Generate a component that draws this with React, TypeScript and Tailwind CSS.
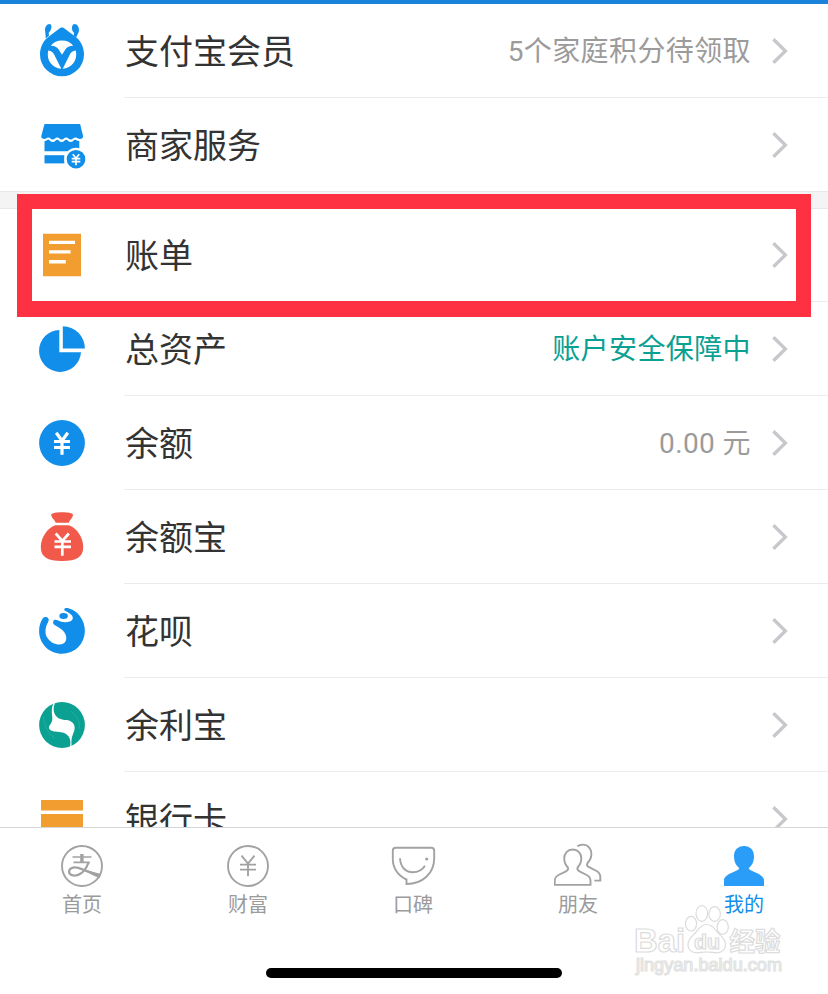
import type { ReactNode } from "react";

const BLUE = "#108ee9";
const ORANGE = "#f29d30";
const GREEN = "#0aa192";
const GRAY = "#a2a2a2";

function IconMember() {
  return (
    <>
      <g fill={BLUE}>
        <path d="M24 7.5c1.4 0 2.2.7 3.2 1.500L39 18c4.300 4 7 10 7 16.300a22 22 0 1 1-44 0C2 28 4.700 22 9 18L20.800 9c1-.8 1.800-1.500 3.200-1.500z" />
        <path d="M11.800 4C8.500 4 6.600 7.500 7.100 11c.3 2.200.6 4.600.6 7.400l3.500-2.900c-.7-1.400-.6-2.400 0-3.500 1.800-1 3.800-7 .6-8z" />
        <path d="M36.200 4c3.300 0 5.200 3.500 4.700 7-.3 2.200-1.600 3.600-2.600 6.400l-2.800-1.900c.7-1.400.6-2.400 0-3.500-1.800-1-2.500-7 .7-8z" />
      </g>
      <g fill="#fff">
        <path d="M12.800 25.700c2.500-3.300 6.500-5.200 11.200-5.200s8.700 1.900 11.200 5.200c-4.200.2-6 1.300-7.700 3.600L24 34.700l-3.500-5.400c-1.700-2.300-3.500-3.400-7.700-3.600z" />
        <path d="M10.200 30.500c3 .3 4.700 1.500 6.200 4.500l6.900 13.700C14.300 48 8 40.500 10.200 30.500z" />
        <path d="M37.800 30.500c-3 .3-4.700 1.500-6.200 4.500l-6.900 13.700C33.700 48 40 40.500 37.800 30.500z" />
      </g>
    </>
  );
}

function IconShop() {
  return (
    <>
      <g fill={BLUE}>
        <path d="M6.500 10h35.600l3 12.300c0 1.700-1.500 2.700-3 2.700-2.200 0-2.700-1.600-4.700-1.600-2.200 0-2.500 2.200-4.700 2.200s-2.400-2.200-4.500-2.200-2.400 2.200-4.500 2.200-2.300-2.200-4.500-2.200-2.300 2.200-4.500 2.200-2.500-2.200-4.500-2.200c-1.500 0-2 1.600-4 1.600-1.500 0-3-1-3-2.700z" />
        <path d="M6.500 27c2.300 0 2.700-1.600 3.800-1.600S12.500 28 14.700 28s3-2.300 4.500-2.300S21.500 28 23.700 28s3-2.300 4.500-2.300S30.500 28 32.700 28s3-2.300 4.500-2.300c1.200 0 2 1.300 4.100 1.300v10.200H6.500z" />
        <path d="M6.500 41.200h19.800v8.200H6.500z" />
      </g>
      <circle cx="38" cy="45.200" r="10.400" fill={BLUE} stroke="#fff" strokeWidth="2.200" />
      <path d="M34.800 40.200l3.200 4 3.200-4M33.700 44.700h8.600M33.700 47.700h8.600M38 44v7.200" fill="none" stroke="#fff" strokeWidth="1.700" />
    </>
  );
}

function IconBill() {
  return (
    <>
      <path d="M5 9.800h38v42.400H5z" fill={ORANGE} />
      <path d="M11 16.800h26v3.300H11zM11 26.200h21.600v3.400H11zM11 36h16.800v3.400H11z" fill="#fff" />
    </>
  );
}

function IconPie() {
  return (
    <g fill={BLUE}>
      <path d="M21.300 11.900A21 21 0 1 0 43 34.200H21.300z" />
      <path d="M24.800 8.200A22.200 22.200 0 0 1 46.900 30.400H24.800z" />
    </g>
  );
}

function IconBalance() {
  return (
    <>
      <circle cx="24" cy="31" r="22.900" fill={BLUE} />
      <path d="M18.200 20.800l5.800 8 5.800-8M16 29.500h16M16 35.500h16M24 28v14.700" fill="none" stroke="#fff" strokeWidth="3.200" />
    </>
  );
}

function IconBag() {
  return (
    <>
      <g fill="#f15a4a">
        <path d="M13.200 8.800c0-1.600 5-2.500 10.900-2.500S35 7.200 35 8.800c0 3-3 4.800-4.200 8H17.700c-1.200-3.200-4.500-5-4.500-8z" />
        <path d="M17.500 19.200h13.200C39 22 45.200 31.500 45.200 41c0 10-6.500 14-21.200 14S2.800 51 2.800 41c0-9.500 6.400-19 14.700-21.800z" />
      </g>
      <path d="M17.700 27.500l6.600 7.500 6.600-7.500M16.500 35.500H33M16.500 40.800H33M24.300 34.500v15.200" fill="none" stroke="#fff" strokeWidth="2.700" />
    </>
  );
}

function IconHuabei() {
  return (
    <g fill={BLUE}>
      <path d="M29.700 8C39.600 10.300 46.900 19.800 46.900 31A22.900 22.900 0 0 1 24 53.800C11.300 53.800 1.100 43.800 1.100 31c0-4.700 1.200-8.700 3.400-12.200 1.300-2.300 4.200-2.400 5.700-.5 1.200 1.800.1 3.600-.9 5.400C7.200 27.500 6.500 34 9.500 38c3 4.500 7.500 6.600 12 6.500 4.500-.1 7.300-3 6.700-7.500-.7-5.500-5.200-8.500-11.200-11.700-2-1.100-2.200-2.800-1.700-4 .7-1.800 2.700-1.900 4.300-1 3.400 2 8.400 2.500 12.200 1.300 3.600-1.500 3.700-4.500 1.700-6.700-1.600-1.800-4-2.900-6.100-4-2.300-1.100-1-3.600 2.300-2.900z" />
      <ellipse cx="25.600" cy="16" rx="4.300" ry="2.900" />
    </g>
  );
}

function IconYulibao() {
  return (
    <>
      <circle cx="24" cy="31" r="22.900" fill={GREEN} />
      <path
        d="M17 9c-2 4.500-1.700 8.500 0 11.500 2.500 4.500 7 5.300 11.500 5.500 4.500.5 7.800 3 8.100 7 .4 4.500-2.700 8-3.100 13-.2 3 .3 4-.2 7l-1.400.5c.9-4.500.6-7-.4-9.500-2-4-5-5.500-10.500-6-4.500-.5-9.200-.7-10.100-4-.1-3 3.100-4.500 3.400-8.500.2-3-.5-5-.5-8 0-3.500.7-6 1.600-8.200z"
        fill="#fff"
      />
      <path d="M33.500 17.500c5.500 5 8.300 10 8 17M5.500 23c.5 7 3 14.500 11 21" fill="none" stroke="#43b5a8" strokeWidth=".5" />
    </>
  );
}

function IconCard() {
  return <path d="M3 12h42v10.400H3zM3 26h42v30H3z" fill={ORANGE} />;
}

function Chevron() {
  return (
    <svg width="20" height="30" viewBox="0 0 20 30" className="mt-8 shrink-0">
      <path d="M5.400 3.200L17.400 15 5.400 26.800" fill="none" stroke="#c7c7cc" strokeWidth="3.300" />
    </svg>
  );
}

interface RowProps {
  icon: ReactNode;
  label: string;
  note?: string;
  noteClass?: string;
  border?: string;
}

function Row({ icon, label, note, noteClass = "text-[#9b9b9b]", border = "inset" }: RowProps) {
  return (
    <div className={`flex h-[94px] shrink-0 items-start pl-[38px] ${border === "full" ? "border-b border-[#e8e8e8]" : ""}`}>
      <svg width="48" height="61" viewBox="0 0 48 61" className="mt-4 shrink-0">
        {icon}
      </svg>
      <div
        className={`ml-[38px] flex min-w-0 flex-1 items-start self-stretch pr-10 ${
          border === "inset" ? "border-b border-[#ebebeb]" : ""
        }`}
      >
        <span className="mt-6 flex-1 pl-px text-[34px] leading-[48px] text-[#333]">{label}</span>
        {note && (
          <span
            className={`mt-7 mr-[17px] font-['Roboto','Noto_Sans_CJK_SC',sans-serif] text-[28px] leading-[40px] tracking-[0.4px] whitespace-pre ${noteClass}`}
          >
            {note}
          </span>
        )}
        <Chevron />
      </div>
    </div>
  );
}

const TABS = [
  {
    label: "首页",
    icon: (
      <>
        <circle cx="24" cy="24" r="20" />
        <path d="M14.500 15h19M15.500 20.300h16.300" strokeWidth="1.700" />
        <path d="M23.900 12v8.300" strokeWidth="3.400" />
        <path d="M30.500 20.500c-2 6-5.500 10.500-10.300 12.300-4.500 1.700-9 .3-9.100-3-.1-3.300 3.600-5 7.900-4.100 5.500 1 10 4.300 23 8" strokeWidth="2.300" />
        <path d="M26 27.500l17 4.500-1.300 4c-5.500-1.700-11.500-4.500-15.700-8.500z" fill={GRAY} stroke="none" />
      </>
    ),
  },
  {
    label: "财富",
    icon: (
      <>
        <circle cx="24" cy="24" r="20" />
        <path d="M17.500 13.700l6.500 7.800 6.500-7.800M16 22.600h16M16 27.600h16M24 21.500v12.800" />
      </>
    ),
  },
  {
    label: "口碑",
    icon: (
      <>
        <path d="M6.800 5.800h35.400c1.800 0 3 1.200 3 3v7.500c0 15-11.500 25.700-27.700 25.700v-4.500C9.500 34.200 3.800 26.500 3.800 17V8.800c0-1.800 1.200-3 3-3z" />
        <path d="M11 16.300c.3 8.500 5.500 14 12.800 14 5.200 0 9.500-2.300 12.200-6.500" />
        <circle cx="37.700" cy="17" r="1.600" fill={GRAY} stroke="none" />
      </>
    ),
  },
  {
    label: "朋友",
    icon: (
      <>
        <path d="M18.700 7.500c-5.200 0-8.500 3.800-8.500 9 0 4 1.400 6.500 3.700 9 .6 1.600-.3 3-2 3.800L4.500 33c-3 1.500-3.800 3-3.800 6v3.900h35.800V39c0-3-.8-4.500-3.800-6l-7.200-3.700c-1.700-.8-2.500-2.200-1.900-3.800 2.300-2.500 3.700-5 3.700-9 0-5.200-3.300-9-8.600-9z" />
        <path d="M23.300 4.300c1.500-1 3.200-1.700 5.500-1.700 5.200 0 8.600 4 8.600 9.400 0 4-1.500 6.500-3.800 9-1 1.700-.8 3 1 3.900l8 4.100c3 1.700 3.700 3 3.700 6v3.600h-6" />
      </>
    ),
  },
  {
    label: "我的",
    active: true,
    icon: (
      <path
        d="M24 4c-6.200 0-10 4.200-10 10.300 0 5 1.500 8.700 5.300 12C18.700 29.500 4 31.500 4 38.500V44h40v-5.500c0-7-14.700-9-15.300-12.200 3.800-3.300 5.300-7 5.300-12C34 8.200 30.200 4 24 4z"
        fill="#2a9df8"
        stroke="none"
      />
    ),
  },
];

function TabBar() {
  return (
    <nav className="grid h-[141px] shrink-0 grid-cols-[164px_168px_162px_168px_166px] border-t border-[#d6d6d8] bg-white pt-[14px]">
      {TABS.map((tab) => (
        <div key={tab.label} className={`flex flex-col items-center ${tab.active ? "pr-[2px] text-[#108ee9]" : "text-[#9b9b9b]"}`}>
          <svg width="48" height="48" viewBox="0 0 48 48" fill="none" stroke={GRAY} strokeWidth="1.900">
            {tab.icon}
          </svg>
          <span className="mt-px text-[20px] leading-7">{tab.label}</span>
        </div>
      ))}
    </nav>
  );
}

function Watermark() {
  return (
    <svg
      width="156"
      height="80"
      viewBox="0 0 156 80"
      className="absolute top-[900px] left-[632px]"
      fill="#fff"
      stroke="#dcdcdc"
      strokeWidth="1.200"
      fontFamily="'Liberation Sans', 'Noto Sans CJK SC', sans-serif"
      fontWeight="700"
    >
      <text x="2" y="51.500" fontSize="33" textLength="51" lengthAdjust="spacingAndGlyphs">
        Bai
      </text>
      <ellipse cx="59" cy="23.700" rx="5.600" ry="7.300" />
      <ellipse cx="69.800" cy="13.500" rx="5.800" ry="7.800" />
      <ellipse cx="82.600" cy="14" rx="5.800" ry="7.300" />
      <ellipse cx="90.700" cy="27" rx="5.600" ry="7.300" />
      <path d="M74.700 24.500c6 0 8 4.500 11 8 3.500 4 7.800 6.500 7.800 12 0 5-4 8.500-9 8.300-3.500-.2-6-.8-9.800-.8s-6.300.6-9.800.8c-5 .2-9-3.300-9-8.300 0-5.500 4.300-8 7.800-12 3-3.500 5-8 11-8z" />
      <text x="62" y="48.700" fontSize="20" textLength="26" lengthAdjust="spacingAndGlyphs">
        du
      </text>
      <text x="97.500" y="50.500" fontSize="26" textLength="51" lengthAdjust="spacingAndGlyphs">
        经验
      </text>
      <text x="4" y="71" fontSize="17.500" fontWeight="400" stroke="#e2e2e2" textLength="146" lengthAdjust="spacingAndGlyphs">
        jingyan.baidu.com
      </text>
    </svg>
  );
}

export default function App() {
  return (
    <div className="relative flex h-[994px] w-[828px] flex-col overflow-hidden bg-white font-['Inter','Noto_Sans_CJK_SC',sans-serif]">
      <div className="h-1 shrink-0 bg-[#1b82d9]" />
      <main className="flex h-[823px] shrink-0 flex-col overflow-hidden">
        <Row icon={<IconMember />} label="支付宝会员" note="5个家庭积分待领取" />
        <Row icon={<IconShop />} label="商家服务" border="full" />
        <div className="h-4 shrink-0 bg-[#f4f4f4]" />
        <div className="shadow-[inset_0_1px_0_#e8e8e8]">
          <Row icon={<IconBill />} label="账单" />
        </div>
        <Row icon={<IconPie />} label="总资产" note="账户安全保障中" noteClass="text-[#0aa192]" />
        <Row icon={<IconBalance />} label="余额" note="0.00 元" />
        <Row icon={<IconBag />} label="余额宝" />
        <Row icon={<IconHuabei />} label="花呗" />
        <Row icon={<IconYulibao />} label="余利宝" />
        <Row icon={<IconCard />} label="银行卡" border="none" />
      </main>
      <TabBar />
      <div className="h-[10px] w-[296px] shrink-0 self-center rounded-full bg-black" />

      {/* highlight frame around the bill row */}
      <div className="absolute top-[194px] left-[17px] h-[123px] w-[794px] border-[15px] border-b-[16px] border-[#fe3142]" />
      <Watermark />
    </div>
  );
}
